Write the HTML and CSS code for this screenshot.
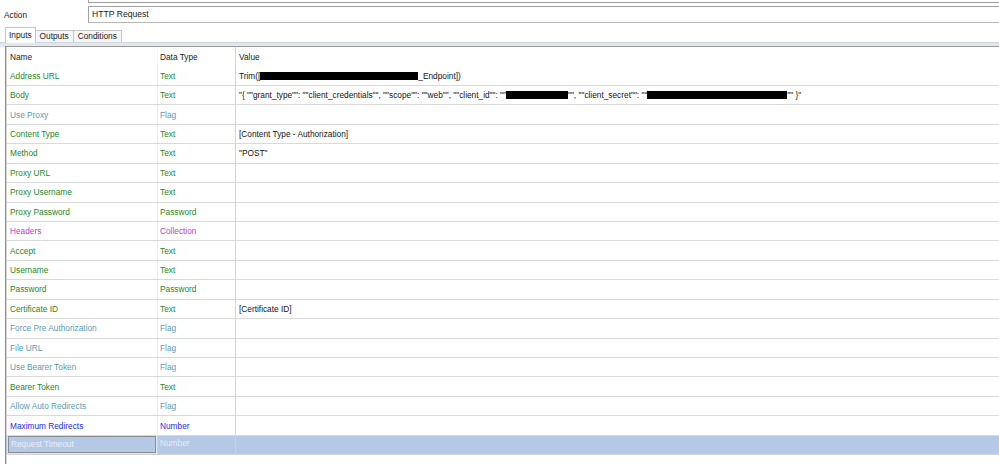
FILE: index.html
```html
<!DOCTYPE html>
<html lang="en">
<head>
  <meta charset="UTF-8" />
  <title>HTTP Request action</title>
  <link rel="stylesheet" href="styles.css">
</head>
<body>
  <div class="top-field"></div>

  <div class="field-row">
    <label class="field-label">Action</label>
    <div class="field-box">HTTP Request</div>
  </div>

  <div class="tabs">
    <div class="tab active">Inputs</div>
    <div class="tab">Outputs</div>
    <div class="tab">Conditions</div>
  </div>

  <div class="tab-page">
    <div class="grid">
      <div class="row head">
        <div class="cell">Name</div>
        <div class="cell">Data Type</div>
        <div class="cell">Value</div>
      </div>

      <div class="row text">
        <div class="cell">Address URL</div>
        <div class="cell">Text</div>
        <div class="cell val">Trim([<span class="redact" style="width: 158px"></span>_Endpoint])</div>
      </div>
      <div class="row text">
        <div class="cell">Body</div>
        <div class="cell">Text</div>
        <div class="cell val">"{ ""grant_type"": ""client_credentials"", ""scope"": ""web"", ""client_id"": ""<span class="redact" style="width: 62px"></span>"", ""client_secret"": ""<span class="redact" style="width: 140px"></span>"" }"</div>
      </div>
      <div class="row flag">
        <div class="cell">Use Proxy</div>
        <div class="cell">Flag</div>
        <div class="cell val"></div>
      </div>
      <div class="row text">
        <div class="cell">Content Type</div>
        <div class="cell">Text</div>
        <div class="cell val">[Content Type - Authorization]</div>
      </div>
      <div class="row text">
        <div class="cell">Method</div>
        <div class="cell">Text</div>
        <div class="cell val">"POST"</div>
      </div>
      <div class="row text">
        <div class="cell">Proxy URL</div>
        <div class="cell">Text</div>
        <div class="cell val"></div>
      </div>
      <div class="row text">
        <div class="cell">Proxy Username</div>
        <div class="cell">Text</div>
        <div class="cell val"></div>
      </div>
      <div class="row text">
        <div class="cell">Proxy Password</div>
        <div class="cell">Password</div>
        <div class="cell val"></div>
      </div>
      <div class="row collection">
        <div class="cell">Headers</div>
        <div class="cell">Collection</div>
        <div class="cell val"></div>
      </div>
      <div class="row text">
        <div class="cell">Accept</div>
        <div class="cell">Text</div>
        <div class="cell val"></div>
      </div>
      <div class="row text">
        <div class="cell">Username</div>
        <div class="cell">Text</div>
        <div class="cell val"></div>
      </div>
      <div class="row text">
        <div class="cell">Password</div>
        <div class="cell">Password</div>
        <div class="cell val"></div>
      </div>
      <div class="row text">
        <div class="cell">Certificate ID</div>
        <div class="cell">Text</div>
        <div class="cell val">[Certificate ID]</div>
      </div>
      <div class="row flag">
        <div class="cell">Force Pre Authorization</div>
        <div class="cell">Flag</div>
        <div class="cell val"></div>
      </div>
      <div class="row flag">
        <div class="cell">File URL</div>
        <div class="cell">Flag</div>
        <div class="cell val"></div>
      </div>
      <div class="row flag">
        <div class="cell">Use Bearer Token</div>
        <div class="cell">Flag</div>
        <div class="cell val"></div>
      </div>
      <div class="row text">
        <div class="cell">Bearer Token</div>
        <div class="cell">Text</div>
        <div class="cell val"></div>
      </div>
      <div class="row flag">
        <div class="cell">Allow Auto Redirects</div>
        <div class="cell">Flag</div>
        <div class="cell val"></div>
      </div>
      <div class="row number">
        <div class="cell">Maximum Redirects</div>
        <div class="cell">Number</div>
        <div class="cell val"></div>
      </div>
      <div class="row selected">
        <div class="cell"><div class="editor">Request Timeout</div></div>
        <div class="cell">Number</div>
        <div class="cell val"></div>
      </div>
    </div>
  </div>
</body>
</html>
```

FILE: styles.css
```css
* {
  margin: 0;
  padding: 0;
  box-sizing: border-box;
}

body {
  font-family: "Liberation Sans", Arial, sans-serif;
  font-size: 8.3px;
  color: #1a1a1a;
  background-color: #fff;
  width: 999px;
  height: 464px;
  overflow: hidden;
}

/* form fields above the tabs */
.top-field {
  margin-left: 88px;
  height: 3px;
  border-left: 1px solid #a8a8a8;
  border-bottom: 1px solid #9c9c9c;
}

.field-row {
  display: flex;
  align-items: center;
  margin-top: 3px;
  height: 17px;
}

.field-label {
  width: 88px;
  padding-left: 4px;
}

.field-box {
  flex: 1;
  height: 17px;
  line-height: 15px;
  padding-left: 3px;
  border-top: 1px solid #a0a0a0;
  border-left: 1px solid #a0a0a0;
  border-bottom: 1px solid #b8b8b8;
  font-size: 8.6px;
}

/* tab strip */
.tabs {
  display: flex;
  align-items: flex-end;
  margin-top: 3px;
  padding-left: 5px;
  height: 16px;
}

.tab {
  height: 12px;
  line-height: 11px;
  padding: 0 4px;
  background-color: #f6f6f6;
  border: 1px solid #c6c6c6;
  border-bottom: none;
  margin-left: -1px;
}

.tab:first-child {
  margin-left: 0;
}

.tab.active {
  height: 16px;
  line-height: 14px;
  padding: 0 3px;
  background-color: #fff;
  position: relative;
  z-index: 1;
  margin-bottom: -1px;
}

.tab-page {
  border-top: 1px solid #cdd5e0;
  padding-top: 3px;
  background: linear-gradient(#e2e7ee, #e2e7ee) top / 100% 4px no-repeat;
  padding-left: 5px;
}

/* property grid */
.grid {
  background-color: #fff;
  border-top: 1px solid #9a9a9a;
  border-left: 1px solid #8c8c8c;
  box-shadow: inset 1px 0 0 #d6d6d6;
  height: 420px;
}

.row {
  display: grid;
  grid-template-columns: 151px 78px 1fr;
  height: 19.45px;
  border-bottom: 1px solid #d9d9d9;
}

.row.head {
  border-bottom: none;
  color: #222;
}

.cell {
  display: flex;
  align-items: center;
  white-space: nowrap;
  padding-left: 4px;
  overflow: hidden;
}

.cell:nth-child(2) {
  border-left: 1px solid #ececec;
  padding-left: 2px;
}

.cell:nth-child(3) {
  border-left: 1px solid #d6d6d6;
  padding-left: 3px;
}

.row.head .cell:nth-child(2) {
  border-left-color: #f2f2f2;
}

.val {
  color: #141414;
}

.redact {
  display: inline-block;
  height: 8px;
  background-color: #000;
}

/* data type colours */
.text .cell:nth-child(-n+2) {
  color: #24882a;
}

.flag .cell:nth-child(-n+2) {
  color: #5a9cb4;
}

.collection .cell:nth-child(-n+2) {
  color: #c23cc4;
}

.number .cell:nth-child(-n+2) {
  color: #2828ec;
}

.row.selected {
  background-color: #b5c9e7;
  border-bottom-color: #cfd3d9;
  color: #e6ecf6;
}

.row.selected .cell {
  border-left-color: #c3d2e8;
}

.row.selected .cell:nth-child(2) {
  align-items: flex-start;
  padding-top: 2px;
}

.editor {
  width: 148px;
  height: 17px;
  margin-left: -2px;
  padding-left: 2px;
  line-height: 15px;
  border: 1px solid #8e8e8e;
  box-shadow: 0 0 0 1px #dfe6f1;
  color: #e8eef7;
}
```
